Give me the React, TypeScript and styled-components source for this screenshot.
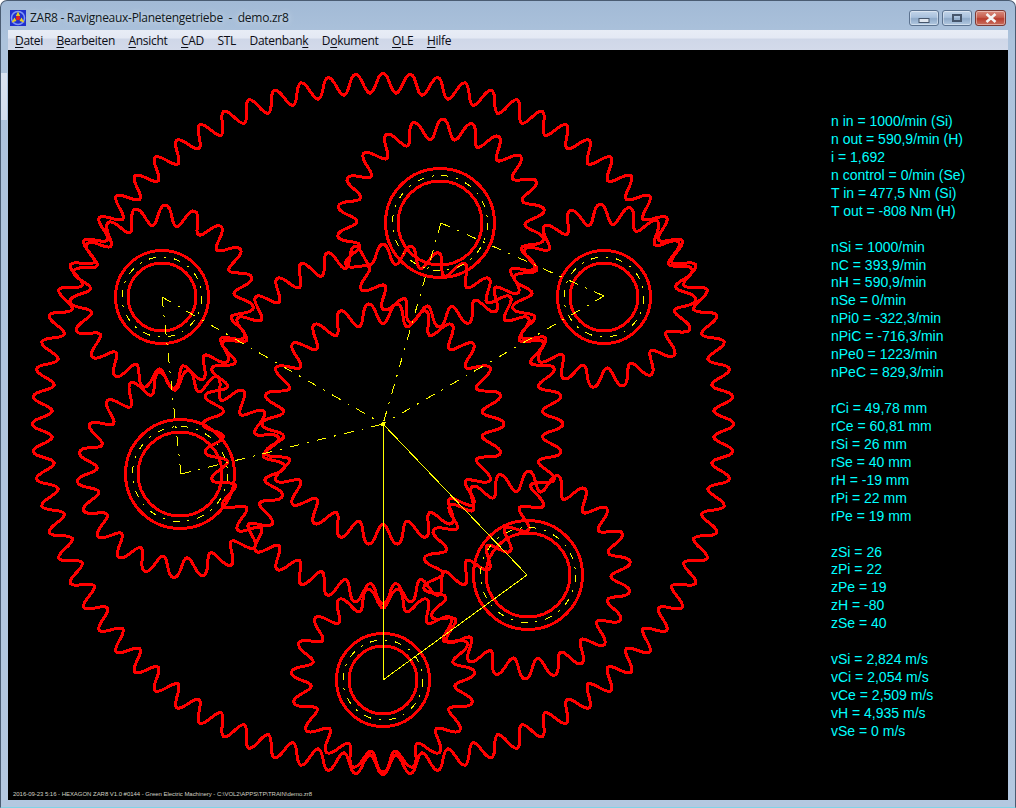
import React from 'react';
import styled, { createGlobalStyle } from 'styled-components';

const GlobalStyle = createGlobalStyle`
  html, body { margin: 0; padding: 0; background: #fff; }
`;

const Window = styled.div`
  width: 1016px;
  height: 808px;
  box-sizing: border-box;
  display: flex;
  flex-direction: column;
  padding: 0 7px 7px;
  border-radius: 7px 7px 0 0;
  border: 1px solid #4a5c72;
  border-bottom-color: #7fd4e6;
  background:
    linear-gradient(180deg, #dbe4f1, #d3deee) 0 72px / 6px 47px no-repeat,
    linear-gradient(180deg, #a2bad6 0px, #adc3dc 40px, #b4c8e0 100%);
  overflow: hidden;
`;

const TitleBar = styled.div`
  height: 29px;
  flex: none;
  display: flex;
  align-items: center;
  gap: 4px;
  margin: 0 2px 0 2px;
  padding-top: 4px;
  box-sizing: border-box;
`;

const TitleText = styled.span`
  flex: 1;
  white-space: pre;
  color: #101820;
  font: 12px "Open Sans", "Noto Sans", sans-serif;
  letter-spacing: -0.28px;
  text-shadow: 0 0 6px rgba(255, 255, 255, 0.7);
`;

const Controls = styled.div`
  display: flex;
  gap: 3px;
`;

const ControlButton = styled.div<{ $close?: boolean }>`
  width: ${p => (p.$close ? 31 : 30)}px;
  height: 16px;
  box-sizing: border-box;
  display: flex;
  align-items: center;
  justify-content: center;
  border-radius: 3px;
  border: 1px solid ${p => (p.$close ? '#7c3a34' : '#5c7390')};
  box-shadow: inset 0 0 0 1px rgba(255, 255, 255, 0.4);
  background: ${p =>
    p.$close
      ? 'linear-gradient(180deg, #d98c7e 0%, #c65e4e 45%, #b83d2e 55%, #c9705f 100%)'
      : 'linear-gradient(180deg, #c3d5e9 0%, #a9c1dd 45%, #8faac9 55%, #b3c9e1 100%)'};
`;

const MenuBar = styled.div`
  height: 20px;
  flex: none;
  display: flex;
  align-items: center;
  gap: 13.5px;
  padding-left: 7px;
  box-sizing: border-box;
  background: linear-gradient(180deg, #e8edf6 0%, #e4e9f4 40%, #cfd7e8 45%, #d3daea 100%);
`;

const MenuItem = styled.span`
  color: #0c0c14;
  font: 12px "Open Sans", "Noto Sans", sans-serif;
  letter-spacing: -0.3px;
  u { text-underline-offset: 2px; }
`;

const Viewport = styled.div`
  flex: 1;
  min-height: 0;
  display: flex;
  flex-direction: column;
  background: #000;
`;

const Stage = styled.div`
  flex: 1;
  min-height: 0;
  display: flex;
`;

const Drawing = styled.svg`
  flex: none;
  display: block;
`;

const Readout = styled.div`
  padding: 63px 0 0 8px;
  color: #00ffff;
  font: 14px/17.94px "Liberation Sans", Arial, sans-serif;
  white-space: pre;
`;

const StatusLine = styled.div`
  height: 12px;
  padding-left: 5px;
  color: #d0d0c4;
  font: 6px/13px "Liberation Sans", Arial, sans-serif;
  letter-spacing: -0.04px;
  white-space: pre;
`;

const CENTER = { x: 383, y: 424 };
// viewport origin in page pixels, the numbers below are page coordinates
const ORIGIN = { x: 8, y: 50 };

// tip = angle in degrees of one outward peak, clockwise from +x
type Gear = { x: number; y: number; z: number; mean: number; amp: number; tip: number; sharp: number };

const gears: Gear[] = [
  { x: 383, y: 424, z: 80, mean: 341, amp: 10, tip: -90, sharp: 0.2 }, // ring H
  { x: 383, y: 424, z: 40, mean: 170, amp: 10, tip: 0, sharp: 0 }, // Se
  { x: 383, y: 424, z: 26, mean: 110.5, amp: 10.5, tip: 0, sharp: 0 }, // Si
  { x: 441, y: 223, z: 22, mean: 94, amp: 10, tip: -89, sharp: 0 },
  { x: 181, y: 474, z: 22, mean: 94, amp: 10, tip: 94, sharp: 0 },
  { x: 527, y: 575, z: 22, mean: 94, amp: 10, tip: 91, sharp: 0 },
  { x: 604, y: 296, z: 19, mean: 82, amp: 10, tip: -92.5, sharp: 0 },
  { x: 162, y: 297, z: 19, mean: 82, amp: 10, tip: -88, sharp: 0 },
  { x: 383, y: 680, z: 19, mean: 82, amp: 10, tip: 90, sharp: 0 },
];

const hubs = [
  { x: 440, y: 223, outer: 54.5, pitch: 47.5, inner: 42 },
  { x: 180, y: 474, outer: 54.5, pitch: 47.5, inner: 42 },
  { x: 528, y: 575, outer: 54.5, pitch: 47.5, inner: 42 },
  { x: 604, y: 297, outer: 46.5, pitch: 40, inner: 34 },
  { x: 162, y: 297, outer: 46.5, pitch: 40, inner: 34 },
  { x: 383, y: 680, outer: 46.5, pitch: 40, inner: 34 },
];

const carrierDashed = [
  [441, 223, CENTER.x, CENTER.y],
  [441, 223, 604, 296],
  [604, 296, CENTER.x, CENTER.y],
  [162, 297, CENTER.x, CENTER.y],
  [162, 297, 181, 474],
  [181, 474, CENTER.x, CENTER.y],
];

const carrierSolid = [
  [CENTER.x, CENTER.y, 383, 680],
  [383, 680, 527, 575],
  [527, 575, CENTER.x, CENTER.y],
];

const DASH = '10 8 2 8';
const HUB_DASH = '7 8 2 8';

// tooth outline: blend of sine and triangle wave in radius, flanks slightly steepened
function gearPath(g: Gear) {
  const pts: string[] = [];
  const perTooth = 16;
  const tip = (g.tip * Math.PI) / 180;
  for (let t = 0; t < g.z; t++) {
    for (let i = 0; i < perTooth; i++) {
      const phi = (i / perTooth) * 2 * Math.PI;
      const tri = (2 / Math.PI) * Math.asin(Math.cos(phi));
      const wave = g.sharp * tri + (1 - g.sharp) * Math.cos(phi);
      const warped = phi + 0.08 * Math.sin(2 * phi);
      const angle = tip + (t * 2 * Math.PI + warped) / g.z;
      const r = g.mean + g.amp * wave;
      const x = g.x + r * Math.cos(angle) - ORIGIN.x;
      const y = g.y + r * Math.sin(angle) - ORIGIN.y;
      pts.push(`${x.toFixed(1)} ${y.toFixed(1)}`);
    }
  }
  return `M${pts.join('L')}Z`;
}

const GearTrain = () => (
  <Drawing width={815} height={738} viewBox="0 0 815 738">
    {gears.map((g, i) => (
      <path key={i} d={gearPath(g)} fill="none" stroke="#ff0000" strokeWidth={3} strokeLinejoin="round" shapeRendering="crispEdges" />
    ))}
    {hubs.map((h, i) => (
      <g key={i} fill="none">
        <circle cx={h.x - ORIGIN.x} cy={h.y - ORIGIN.y} r={h.outer} stroke="#ff0000" strokeWidth={3} shapeRendering="crispEdges" />
        <circle cx={h.x - ORIGIN.x} cy={h.y - ORIGIN.y} r={h.inner} stroke="#ff0000" strokeWidth={3} shapeRendering="crispEdges" />
        <circle cx={h.x - ORIGIN.x} cy={h.y - ORIGIN.y} r={h.pitch} stroke="#ffff00" strokeWidth={1} strokeDasharray={HUB_DASH} shapeRendering="crispEdges" />
      </g>
    ))}
    {carrierDashed.map(([x1, y1, x2, y2], i) => (
      <line key={i} x1={x1 - ORIGIN.x} y1={y1 - ORIGIN.y} x2={x2 - ORIGIN.x} y2={y2 - ORIGIN.y} stroke="#ffff00" strokeWidth={1} strokeDasharray={DASH} shapeRendering="crispEdges" />
    ))}
    {carrierSolid.map(([x1, y1, x2, y2], i) => (
      <line key={i} x1={x1 - ORIGIN.x} y1={y1 - ORIGIN.y} x2={x2 - ORIGIN.x} y2={y2 - ORIGIN.y} stroke="#ffff00" strokeWidth={1} shapeRendering="crispEdges" />
    ))}
    <circle cx={CENTER.x - ORIGIN.x} cy={CENTER.y - ORIGIN.y} r={2} fill="#ffff00" shapeRendering="crispEdges" />
  </Drawing>
);

const AppIcon = () => (
  <svg width="16" height="16" viewBox="0 0 16 16">
    <rect width="16" height="16" fill="#1f2fd0" />
    <circle cx="8" cy="8" r="6.5" fill="none" stroke="#7f96f4" strokeWidth="1.5" />
    <path d="M8 1.5 L5.8 6 L10.2 6Z M1.5 12.5 L6.5 11 L4.5 7.5Z M14.5 12.5 L9.5 11 L11.5 7.5Z" fill="#e8d020" />
    <circle cx="8" cy="8" r="2.2" fill="#e02020" />
  </svg>
);

const menus: [string, string, string][] = [
  ['', 'D', 'atei'],
  ['', 'B', 'earbeiten'],
  ['', 'A', 'nsicht'],
  ['', 'C', 'AD'],
  ['STL', '', ''],
  ['Datenban', 'k', ''],
  ['D', 'o', 'kument'],
  ['', 'O', 'LE'],
  ['', 'H', 'ilfe'],
];

const readout = `n in = 1000/min (Si)
n out = 590,9/min (H)
i = 1,692
n control = 0/min (Se)
T in = 477,5 Nm (Si)
T out = -808 Nm (H)

nSi = 1000/min
nC = 393,9/min
nH = 590,9/min
nSe = 0/min
nPi0 = -322,3/min
nPiC = -716,3/min
nPe0 = 1223/min
nPeC = 829,3/min

rCi = 49,78 mm
rCe = 60,81 mm
rSi = 26 mm
rSe = 40 mm
rH = -19 mm
rPi = 22 mm
rPe = 19 mm

zSi = 26
zPi = 22
zPe = 19
zH = -80
zSe = 40

vSi = 2,824 m/s
vCi = 2,054 m/s
vCe = 2,509 m/s
vH = 4,935 m/s
vSe = 0 m/s`;

export default function App() {
  return (
    <>
      <GlobalStyle />
      <Window>
        <TitleBar>
          <AppIcon />
          <TitleText>ZAR8 - Ravigneaux-Planetengetriebe  -  demo.zr8</TitleText>
          <Controls>
            <ControlButton>
              <svg width="14" height="12" viewBox="0 0 14 12">
                <rect x="2" y="6.5" width="10" height="4" fill="#dfe6ef" stroke="#46566c" />
              </svg>
            </ControlButton>
            <ControlButton>
              <svg width="10" height="8" viewBox="0 0 10 8">
                <rect x="1" y="1" width="8" height="6" fill="none" stroke="#46566c" strokeWidth="2" />
              </svg>
            </ControlButton>
            <ControlButton $close>
              <svg width="14" height="10" viewBox="0 0 14 10">
                <path d="M2.5 1 L11.5 9 M11.5 1 L2.5 9" stroke="#f4f4f4" strokeWidth="2.6" />
              </svg>
            </ControlButton>
          </Controls>
        </TitleBar>
        <MenuBar>
          {menus.map(([a, u, b], i) => (
            <MenuItem key={i}>
              {a}
              {u && <u>{u}</u>}
              {b}
            </MenuItem>
          ))}
        </MenuBar>
        <Viewport>
          <Stage>
            <GearTrain />
            <Readout>{readout}</Readout>
          </Stage>
          <StatusLine>{'2016-09-23 5:16 - HEXAGON ZAR8 V1.0 #0144 - Green Electric Machinery - C:\\VOL2\\APPS\\TP\\TRAIN\\demo.zr8'}</StatusLine>
        </Viewport>
      </Window>
    </>
  );
}
